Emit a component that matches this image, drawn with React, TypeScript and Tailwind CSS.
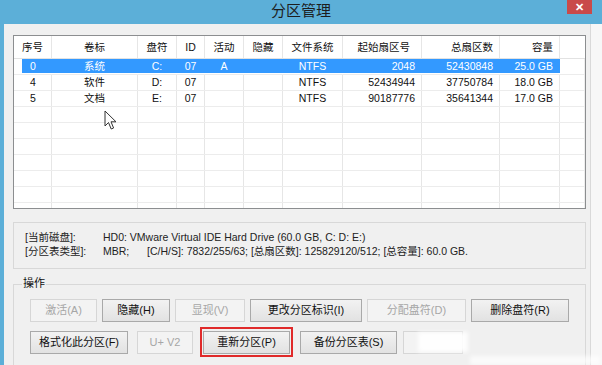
import React from "react";

const FONT = "font-['Liberation_Sans','Noto_Sans_CJK_SC',sans-serif]";

const colW = [
  "w-[30px]",
  "w-[86px]",
  "w-[39px]",
  "w-[28px]",
  "w-[39px]",
  "w-[39px]",
  "w-[60px]",
  "w-[79px]",
  "w-[78px]",
  "w-[60px]",
];

const headAlign = [
  "justify-start",
  "justify-center",
  "justify-center",
  "justify-center",
  "justify-center",
  "justify-center",
  "justify-center",
  "justify-end pr-[11px]",
  "justify-end pr-[6px]",
  "justify-end pr-[6px]",
];

const dataAlign = [
  "justify-start pl-[8px]",
  "justify-center",
  "justify-center",
  "justify-center",
  "justify-center",
  "justify-center",
  "justify-center",
  "justify-end pr-[6px]",
  "justify-end pr-[6px]",
  "justify-end pr-[6px]",
];

const headers = ["序号", "卷标", "盘符", "ID", "活动", "隐藏", "文件系统", "起始扇区号", "总扇区数", "容量"];

const rows: string[][] = [
  ["0", "系统", "C:", "07", "A", "", "NTFS", "2048", "52430848", "25.0 GB"],
  ["4", "软件", "D:", "07", "", "", "NTFS", "52434944", "37750784", "18.0 GB"],
  ["5", "文档", "E:", "07", "", "", "NTFS", "90187776", "35641344", "17.0 GB"],
  ["", "", "", "", "", "", "", "", "", ""],
  ["", "", "", "", "", "", "", "", "", ""],
  ["", "", "", "", "", "", "", "", "", ""],
  ["", "", "", "", "", "", "", "", "", ""],
  ["", "", "", "", "", "", "", "", "", ""],
  ["", "", "", "", "", "", "", "", "", ""],
  ["", "", "", "", "", "", "", "", "", ""],
];

function Btn({
  label,
  w,
  disabled,
}: {
  label: string;
  w: string;
  disabled?: boolean;
}) {
  return (
    <div
      className={
        "h-[23px] flex items-center justify-center text-[11px] border " +
        w +
        (disabled
          ? " border-[#d6d6d6] bg-[#f3f3f3] text-[#a6a6a6]"
          : " border-[#a9a9a9] bg-gradient-to-b from-[#f2f2f2] to-[#e2e2e2] text-[#111]")
      }
    >
      {label}
    </div>
  );
}

export default function App() {
  return (
    <div
      className={
        "relative w-[602px] h-[365px] overflow-hidden bg-[#5cafd8] text-black leading-none " +
        FONT
      }
    >
      {/* Title bar */}
      <div className="h-[24px] flex items-center justify-center relative">
        <span className="text-[15px] text-[#1d1d1d] pb-[3px]">分区管理</span>
        <div className="absolute right-[10px] top-0 w-[25px] h-[14px] bg-[#c94a4a] flex items-center justify-center text-white text-[11px] font-bold">
          ✕
        </div>
      </div>

      {/* Body */}
      <div className="flex h-[341px]">
        <div className="w-[4px]" />
        <div className="w-[586px] bg-[#f0f0f0] pl-[9px] pt-[11px] flex flex-col">
          {/* Table */}
          <div className="w-[573px] h-[174px] border border-[#8c8e90] bg-white overflow-hidden text-[10.5px]">
            <div className="flex h-[23px] border-b border-[#e2e2e2]">
              <div className="w-[8px]" />
              {headers.map((h, i) => (
                <div
                  key={i}
                  className={
                    "flex items-center border-r border-[#e6e6e6] text-[#111] " +
                    colW[i] +
                    " " +
                    headAlign[i]
                  }
                >
                  {h}
                </div>
              ))}
              <div className="flex-1" />
            </div>
            {rows.map((r, ri) => (
              <div key={ri} className="flex h-[16px] border-b border-[#ececec]">
                <div className="w-[8px]" />
                {r.map((c, ci) => (
                  <div
                    key={ci}
                    className={
                      "flex items-center border-r " +
                      colW[ci] +
                      " " +
                      dataAlign[ci] +
                      (ri === 0
                        ? " bg-[#3399ff] text-white border-[#3399ff] mb-[1px]"
                        : " border-[#e6e6e6] text-[#111]")
                    }
                  >
                    {c}
                  </div>
                ))}
                <div className="flex-1 border-r border-[#eeeeee] w-0" />
              </div>
            ))}
          </div>

          {/* Info box */}
          <div className="mt-[13px] w-[573px] h-[47px] border border-[#d8d8d8] pl-[11px] pt-[9px] text-[10.5px] text-[#222] flex flex-col gap-[3px]">
            <div className="flex h-[11px] items-center">
              <span className="w-[78px]">[当前磁盘]:</span>
              <span>HD0: VMware Virtual IDE Hard Drive (60.0 GB, C: D: E:)</span>
            </div>
            <div className="flex h-[11px] items-center">
              <span className="w-[78px]">[分区表类型]:</span>
              <span className="w-[44px]">MBR;</span>
              <span>[C/H/S]: 7832/255/63; [总扇区数]: 125829120/512; [总容量]: 60.0 GB.</span>
            </div>
          </div>

          {/* Operations group */}
          <div className="relative mt-[15px] w-[573px] flex-1 border-t border-l border-r border-[#d8d8d8] pl-[16px] pt-[14px]">
            <span className="absolute left-[8px] top-[-7px] bg-[#f0f0f0] text-[11px] text-[#111] px-[1px]">
              操作
            </span>
            <div className="flex gap-[5px]">
              <Btn label="激活(A)" w="w-[67px]" disabled />
              <Btn label="隐藏(H)" w="w-[68px]" />
              <Btn label="显现(V)" w="w-[70px]" disabled />
              <Btn label="更改分区标识(I)" w="w-[112px]" />
              <Btn label="分配盘符(D)" w="w-[99px]" disabled />
              <Btn label="删除盘符(R)" w="w-[98px]" />
            </div>
            <div className="flex items-center mt-[5px]">
              <Btn label="格式化此分区(F)" w="w-[98px]" />
              <div className="w-[9px]" />
              <Btn label="U+ V2" w="w-[56px]" disabled />
              <div className="w-[7px]" />
              <div className="border-2 border-[#e02a2a] p-[1px] w-[93px] h-[30px] flex items-center justify-center">
                <Btn label="重新分区(P)" w="w-[87px]" />
              </div>
              <div className="w-[7px]" />
              <Btn label="备份分区表(S)" w="w-[97px]" />
              <div className="w-[6px]" />
              <Btn label="" w="w-[60px]" disabled />
            </div>
          </div>
        </div>
        <div className="flex-1 bg-[#f7f7f7] border-l border-[#d9d9d9]" />
      </div>

      {/* Watermark blur patch */}
      <div className="absolute left-[418px] top-[332px] w-[50px] h-[20px] bg-white/90 blur-[2px]" />
      <div className="absolute left-[470px] top-[356px] w-[130px] h-[9px] bg-white/70 blur-[2px]" />

      {/* Mouse cursor */}
      <svg
        className="absolute left-[104px] top-[110px]"
        width="14"
        height="21"
        viewBox="0 0 14 21"
      >
        <path
          d="M1 1 L1 16 L4.5 12.5 L7.2 19 L9.6 18 L7 11.8 L12 11.8 Z"
          fill="#fdfdfd"
          stroke="#333"
          strokeWidth="1"
          strokeLinejoin="round"
        />
      </svg>
    </div>
  );
}
